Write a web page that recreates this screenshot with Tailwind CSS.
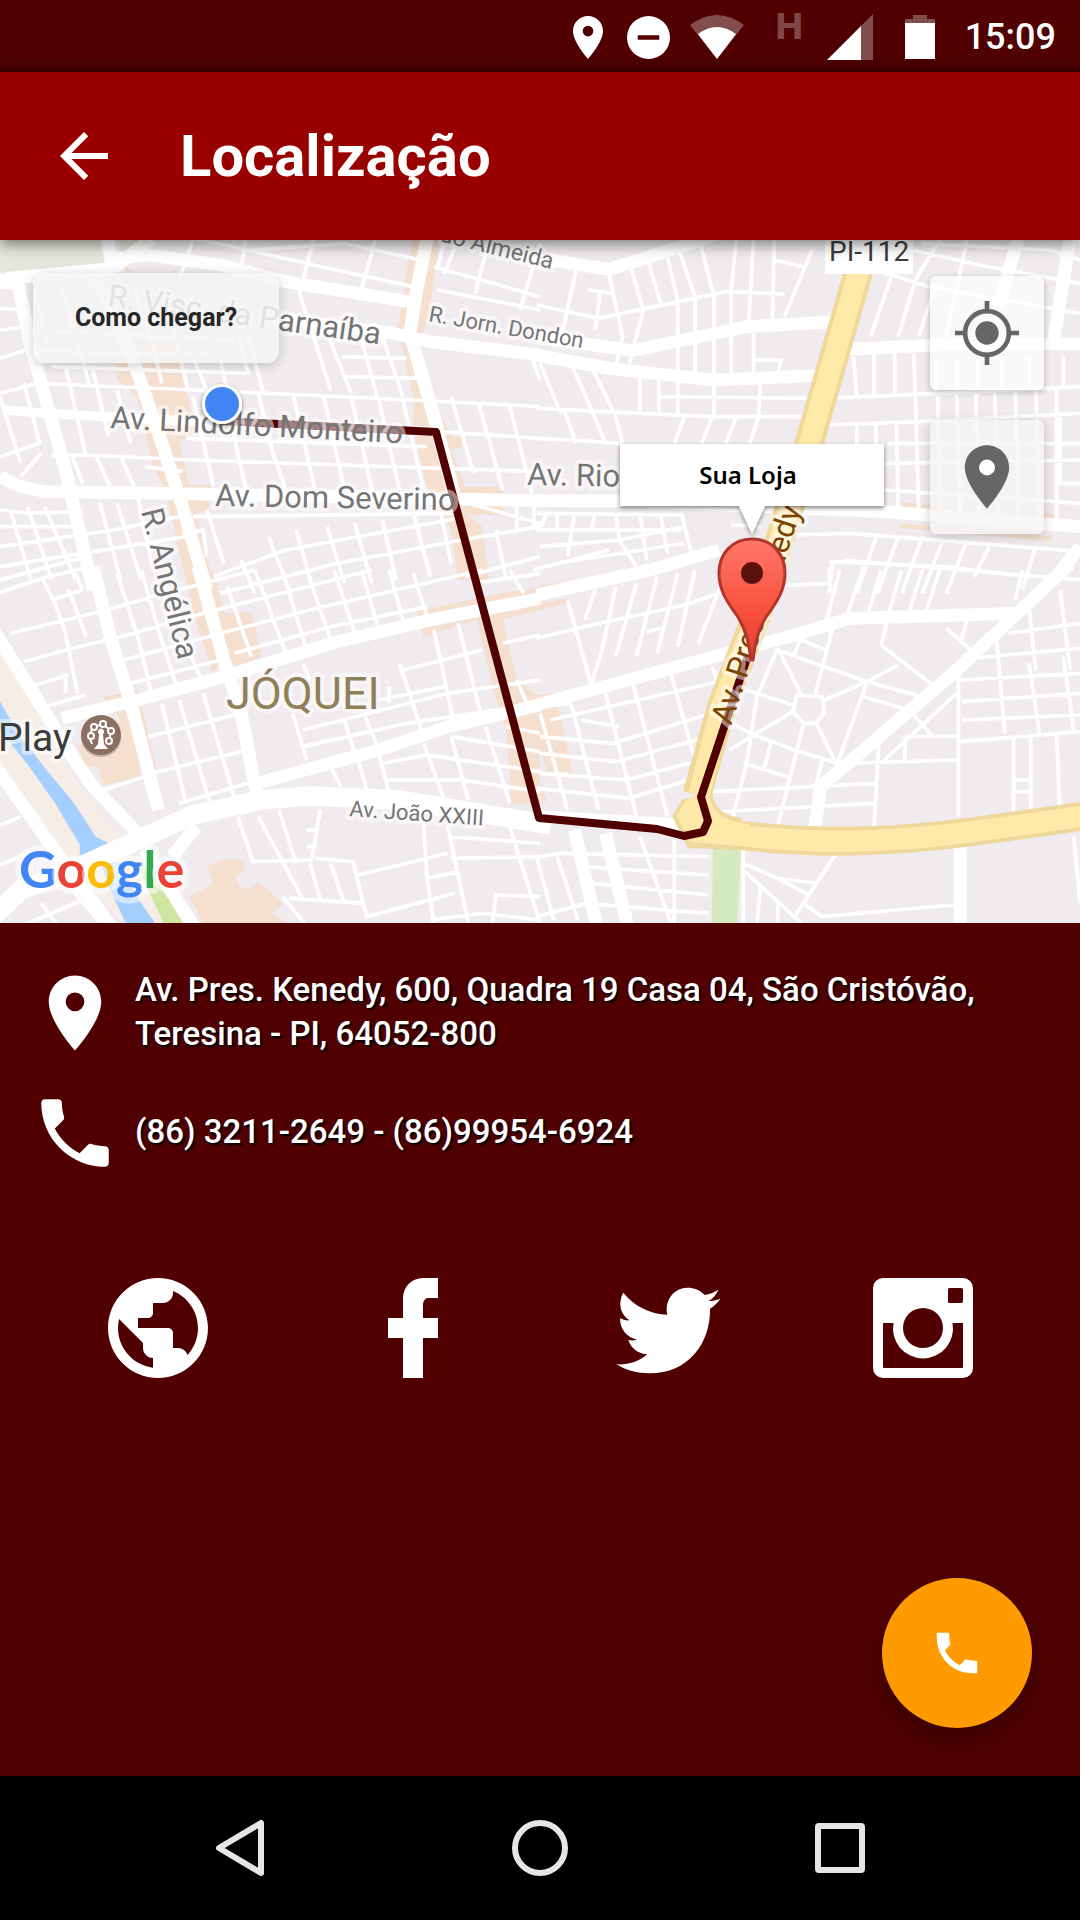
<!DOCTYPE html>
<html lang="pt-BR">

<head>
    <meta charset="UTF-8">
    <meta name="viewport" content="width=device-width, initial-scale=1.0">
    <title>Localização</title>
    <script src="https://cdn.jsdelivr.net/npm/@tailwindcss/browser@4"></script>
</head>

<body class="bg-[#500000] font-['Roboto',sans-serif] min-h-screen flex flex-col">

  <!-- Status bar -->
  <div class="h-[72px] bg-linear-to-b from-[#500000] from-80% to-[#400000] flex items-center justify-end pt-0.5 pr-6 text-white">
    <svg class="w-[30px] h-[43px]" viewBox="5 2 14 20" fill="currentColor"><path d="M12 2C8.13 2 5 5.13 5 9c0 5.25 7 13 7 13s7-7.75 7-13c0-3.87-3.13-7-7-7zm0 9.5a2.5 2.5 0 0 1 0-5 2.5 2.5 0 0 1 0 5z"/></svg>
    <svg class="ml-6 w-[43px] h-[43px]" viewBox="2 2 20 20" fill="currentColor"><path d="M12 2a10 10 0 1 0 0 20 10 10 0 0 0 0-20zm5 11H7v-2h10z"/></svg>
    <svg class="ml-5 w-[54px] h-[44px]" viewBox="0 0 54 44" fill="currentColor"><path class="opacity-30" d="M0 10Q27-10 54 10L27 44z"/><path d="M8 19Q27 5 46 19L27 44z"/></svg>
    <span class="ml-8 h-[58px] text-[36px] leading-9 font-extrabold font-['Inter',sans-serif] text-white/30">H</span>
    <svg class="ml-6 w-[46px] h-[46px]" viewBox="0 0 46 46" fill="currentColor"><path class="opacity-30" d="M34 12L46 0v46H34z"/><path d="M34 12v34H0z"/></svg>
    <svg class="ml-8 w-[30px] h-[44px]" viewBox="0 0 30 44" fill="currentColor"><path class="opacity-30" d="M8 0h14v4h8v4H0V4h8z"/><path d="M0 8h30v36H0z"/></svg>
    <time class="ml-[30px] text-[36px] leading-[68px] font-medium">15:09</time>
  </div>

  <!-- Header -->
  <header class="relative z-10 h-[168px] bg-[#990000] shadow-[0_4px_14px_rgba(0,0,0,.5)] flex items-center gap-[60px] px-12">
    <button type="button" aria-label="Voltar" class="text-white">
      <svg class="w-[72px] h-[72px]" viewBox="0 0 24 24" fill="currentColor"><path d="M20 11H7.83l5.59-5.59L12 4l-8 8 8 8 1.41-1.41L7.83 13H20v-2z"/></svg>
    </button>
    <h1 class="text-white text-[58px] leading-[72px] font-bold">Localização</h1>
  </header>

  <!-- Map -->
  <main class="grow flex flex-col">
    <section class="relative" aria-label="Mapa">
      <svg class="block w-full bg-[#efebee]" viewBox="0 240 1080 683" font-family="Roboto, sans-serif">
        <defs>
          <linearGradient id="marker" x1="0" y1="0" x2="0" y2="1">
            <stop offset="0" stop-color="#ff7868"/>
            <stop offset=".6" stop-color="#f8503c"/>
            <stop offset="1" stop-color="#e53d2e"/>
          </linearGradient>
          <filter id="soft" x="-20%" y="-20%" width="140%" height="160%">
            <feDropShadow dx="0" dy="2" stdDeviation="2" flood-opacity=".5"/>
          </filter>
        </defs>

        <!-- Areas -->
        <g transform="translate(0 230) scale(.3444 .3333)">
          <path fill="#e6e6dc" d="M0 30H290L302 95L250 130L0 125zM345 30H405L350 75z"/>
          <path fill="#f5dfcf" d="M1200 30H1275L1250 230L1220 340L1265 520L1310 620H1340V650L1310 660L1350 770H1460V855H1360L1400 890L1420 1050H1330L1310 900L1240 770L1200 600L1200 500L1155 300L1180 120zM360 100L385 130L370 150zM330 330L490 330L520 400L570 600L520 640L550 765H620L600 850L570 840L590 950L620 1050H540L480 780L440 700L400 500L340 450z"/>
        </g>
        <g transform="translate(540 230) scale(.3444 .3333)">
          <path fill="#f5dfcf" d="M1050 815L1495 852V864L1050 832zM1045 880L1485 918V934L1045 894z"/>
        </g>
        <g transform="translate(0 570) scale(.3444 .3333)">
          <path fill="#f5ede6" d="M0 235L230 650L375 820L530 1059H360L190 890L0 590z"/>
          <path fill="#a5cfff" d="M0 395L60 500L135 600L215 700L278 800L338 832L262 878L232 855V825L160 700L85 590L0 480zM290 870L345 880L410 1000L450 1059H365L320 960z"/>
          <path fill="#cde6a0" d="M390 870L440 900L530 1059H475z"/>
          <path fill="#f5dfcf" d="M535 0H620L650 130L730 125L760 260L690 290L650 260L620 310L560 130zM300 380L350 370L400 360L455 600H435L400 440L405 620L300 645L285 590H250L225 530L350 450zM1210 125L1400 80L1568 50V120L1460 150L1500 330L1568 380V700H1485L1470 480L1430 350L1385 150L1230 200zM600 890L650 868H705L710 895L680 925L700 950L720 960L750 935L820 1000L790 1030L830 1059H590L550 980L620 940z"/>
        </g>
        <g transform="translate(540 570) scale(.3444 .3333)">
          <path fill="#f5dfcf" d="M0 45L70 35V48L0 62zM0 100L80 85V102L0 120zM-10 375L35 368L55 420L95 605H20L-10 500zM-10 600L20 695H5z"/>
        </g>

        <!-- Side streets -->
        <g fill="none" stroke="#fff" stroke-width="11">
          <path transform="translate(0 230) scale(.3444 .3333)" d="M0 170L60 175M0 235L70 240M0 300L80 290M0 385L90 355M0 490L110 460L160 462L560 480L1200 510L1568 530M150 410L720 430L690 310M150 675L250 675L560 690L1568 725M540 625L1240 650M1270 605L1568 625M420 710L530 725M990 380L1180 385M1000 440L1230 445M80 360L320 370L700 375M100 300L680 330
            M560 30L520 150M715 20L700 110M910 30L870 190L960 480M1090 30L1040 210M540 20L720 60L910 105L1200 170M720 60L1000 40L1220 90M1260 110L1568 200M1290 30L1270 120M1330 30L1290 130M1420 30L1380 190M1568 40L1510 240M1270 180L1568 240
            M950 310L1020 490M1050 330L1095 500M1110 320L1170 500M720 320L765 490M560 380L600 480M640 390L660 480M100 180L140 350M180 180L230 350L260 470M390 180L440 330L470 460M480 190L545 480
            M190 410L250 680M270 420L315 620M340 480L380 640M1310 500L1375 730M1390 520L1460 780M1480 530L1545 790M1540 370L1568 450
            M560 500L620 770M650 490L715 780M750 490L800 700M770 600L830 780M850 490L915 780M940 500L1000 780M1020 500L1080 780M1100 510L1160 780M1170 510L1230 780
            M0 500L60 700M70 460L115 640L0 680M120 670L60 740M210 680L240 760M280 680L320 770M350 680L390 770M0 840L80 850L240 845M0 890L230 890M0 950L330 900L520 860M0 1010L540 920M0 1050L250 980M30 840L90 1050M80 830L150 1050M130 830L220 1050M290 820L350 1050M340 820L410 1050M400 800L440 1000
            M560 860L1320 850M620 1040L830 960L1330 865M640 1090L980 1000L1340 930L1568 890M600 840L650 1000M700 990L740 1090M780 920L840 1080M860 900L910 1080M950 890L1000 1060M1030 880L1080 1060M1110 870L1150 1050M1200 850L1250 1040M1280 850L1310 1000M1360 820L1568 880M1500 830V900M1550 830V890M1440 900L1470 1050M1350 1040L1568 980M530 910L590 900L600 980"/>
          <path transform="translate(540 230) scale(.3444 .3333)" d="M105 120L60 330M140 180L210 190M175 185L160 300M200 130L240 320L220 410M260 100L300 240L260 400M310 80L350 220M365 60L400 210V550M400 50L450 200V450M460 20L505 200V560M570 30L555 180V450M620 30L605 290M680 30L675 270M790 60L710 260M-10 225L170 265L540 185L710 192M680 90L770 112M620 390H700L690 435M620 310V440M290 430V545M345 440V545M345 500L800 505L950 500L1568 470M-10 535L500 560L830 560M70 540L105 640M-10 625L90 630L230 640M0 400L60 550M90 400L150 540L190 640M150 410L220 560L240 640M420 560L390 640M500 560L470 640M570 560L540 640M640 450L635 560L610 640
            M910 380L920 500M970 370V500M1030 370V500M1085 370L1090 500M830 585L1100 575L1568 550M920 585V690L930 820M975 585V830M1035 580L1040 840M1090 500L1100 850M1155 490L1160 850M1210 480L1220 850M1265 480L1275 860M1320 480L1330 860M1380 480L1390 860M1440 470L1450 870M1500 480V870M1010 640H1568M1000 700L1568 690M1000 780L1568 820M1020 140L960 320M1090 150L1040 320M1160 30L1090 150M1150 160L1100 320M970 120L1130 170L1568 250M1080 60L1300 110L1568 160M1240 30L1180 320M1110 40L1480 60L1568 90M1150 390V500M1210 390V500M1270 390V500M1340 380V480M1420 380V470M1520 380V470M1510 550V760H1568
            M-10 850L410 855M-10 900L410 900M0 950L230 930L420 890M50 1000L420 940M-20 1020L200 960M20 850L0 900M50 850V900M100 850L80 980M160 850L150 900M220 850L230 930L280 1010M290 850L310 990M350 850L370 970M410 850L440 970M555 885L640 890M740 915L900 910L1568 965M980 910L920 1090M1040 920L980 1090M1110 920L1050 1090M1170 930L1110 1090M1240 930L1180 1090M1310 940L1260 1040M1440 950L1400 1080M850 990L840 1090M840 995L1180 1010L1420 1040"/>
          <path transform="translate(0 570) scale(.3444 .3333)" d="M-10 70L140 20L260 -10M30 190L290 125L480 70L740 0M150 90L240 60M70 275L210 235L350 200L590 130L740 90L1080 0M100 345L200 315M130 410L250 375M360 270L640 190L900 120L1150 60L1400 0M380 340L640 270M680 250L960 170L1240 110
            M120 20L160 100L190 190L225 370M200 60L250 200M220 10L240 60M340 10L400 200L440 370M410 0L460 180L510 340M490 -10L530 180M550 250L590 340M660 50L730 260M740 0L830 250M820 0L890 240M890 0L960 210M970 0L1030 190M1050 0L1100 180M1130 0L1170 150M1200 10L1240 140M190 310V370
            M470 400L540 700M520 390L610 700M590 370L680 680M430 500L700 430M440 610L720 540M520 700L720 640M850 430L890 570M880 280L900 330M880 480L1300 370L1568 330M880 530L1180 460L1440 420M1000 450L1030 550M1060 440L1100 540M1160 280L1230 500M1260 180L1320 470M1330 160L1400 450M1170 300L1400 240M1130 350V400M1100 390L1290 350M1460 220L1568 195M1500 330L1530 400M1480 0L1520 70M1380 40L1568 10
            M960 590L990 650M1040 570L1065 660M1100 550L1130 670M1230 520L1290 690M1310 500L1360 690M1410 470L1480 700M1470 470L1568 490M1110 580L1240 555L1568 605M1120 630L1340 630L1568 665M1310 500L1568 545
            M690 740L735 875L905 870L930 720M750 740L880 990M810 720L860 880M890 780H925M890 830H920M915 865L1025 875L1065 1040L1320 970M840 985L1060 1000M900 880L930 990M960 880L1000 1000M820 980L900 1080M1040 915L1300 850M1230 760L1240 925L1260 1060M1300 770L1360 1060M1300 800L1568 820M1310 865L1568 860M1480 770L1568 1060M1240 925L1330 905M1430 1059L1440 975L1568 980M1250 1050L1400 1030L1568 1050M-10 770L60 740M-10 890L100 840M60 1070L240 990M120 1000L170 1070M210 960L300 1070M300 660L420 620"/>
          <path transform="translate(540 570) scale(.3444 .3333)" d="M-10 205L150 165L420 105L520 70M160 60L130 150M220 50L180 240L150 340M280 40L220 260M340 20L280 260M400 10L340 250M450 0L400 230M520 60L460 220M80 90L150 350M310 185L350 175M640 50L840 40M840 -10V40M870 0L830 160M940 -10L890 140M990 0L950 140M1050 0L1010 140M1110 0L1070 130M1160 0L1120 130M880 -30L1568 30M1400 0L1380 90M1360 190L1568 160M1420 110L1440 300M1510 60L1540 300M1250 265L1568 235M1220 330L1568 310M1225 395L1568 370M1225 450L1568 435M1220 515L1568 485M1325 200L1350 490M1420 280L1450 490M1520 260L1550 480M1215 310V740M1375 500V740M1425 490V740M1500 490L1510 740M1380 630H1425M1380 665H1425
            M690 235L630 380L600 580L560 740M690 235L760 375M690 240L950 335L1040 285M850 175L800 370M760 210L830 240M760 200L735 260M990 225L1140 345M990 225L1010 150M1180 175L1250 240M1240 150L1220 220M825 390L950 335M950 335L860 590M950 335L1110 380M940 380L1070 420M1080 430L1140 500M1000 570L1210 370M1060 500L1210 498M1060 500V570M880 580L1210 570M985 500L970 770M745 375L820 380L825 430L800 460H765L735 425zM735 405L600 360M735 425L620 495L740 540L880 585M765 460L690 770M800 455L860 580M550 540L620 495L540 450M670 520L650 600M590 580L720 620M820 570L800 650M500 665L975 640M520 725L970 700
            M30 450L540 330M0 410L90 400M0 500L210 520L500 430M0 550L220 575L490 500M0 610L250 630L450 575M-10 655L260 685L430 630M90 400L170 720M190 370L280 740M270 340L370 740M380 310L450 570M500 290L520 350M120 450L230 470M0 430L80 720
            M0 860L60 850L490 860M50 860L110 1050M-10 860L40 1050M120 890L490 915M150 940L490 975M130 1000L490 1030M-10 1040L140 1000M290 800L380 1059M390 810V1059M590 880L690 925L805 940M590 900L770 1070M690 925L780 975M860 850L740 1040M770 1005L820 1040L1200 1005M640 950L630 1059M690 1000V1059M590 840V1059M1550 800L1568 1000"/>
        </g>

        <!-- Avenues -->
        <g fill="none" stroke="#fff" stroke-linejoin="round" stroke-width="38">
          <path transform="translate(0 230) scale(.3444 .3333)" d="M310 0L325 110M20 145L330 115L440 25M330 85L430 75L640 105L830 155L1190 215M-10 150L50 150L90 350L190 720L270 1080M250 130L300 180L390 400L470 640L530 830L600 1080M760 260L1140 310L1250 335L1568 375M1245 0L1210 180L1190 310L1260 560L1320 800M0 740L60 770L130 785L480 790L1568 812"/>
          <path stroke-width="28" transform="translate(0 230) scale(.3444 .3333)" d="M10 540L140 550L400 565L1260 605"/>
          <path transform="translate(540 230) scale(.3444 .3333)" d="M30 90L200 118L440 40L560 -10M-10 320L270 362L600 290L860 275M-30 372L200 415L500 450L820 436M890 358L1200 342H1568M-10 812H240L640 830L1000 845L1568 890M1390 20L1330 230M1540 20L1490 340M1500 1040L1568 950"/>
          <path transform="translate(0 570) scale(.3444 .3333)" d="M-20 180L60 310L150 460L210 560L270 650L400 790M-20 580L110 770L200 900L330 1080M500 860L570 770M420 840L570 1080M270 -10L320 200L380 400L430 600L460 720M575 -10L650 270L700 430L745 670M180 445L400 390L650 320L980 215L1250 150L1568 85M745 640L1100 540L1300 470L1568 405"/>
          <path stroke-width="58" transform="translate(0 570) scale(.3444 .3333)" d="M-20 1040L60 960L200 905L400 810L560 735L760 690L900 678L1160 690L1600 765"/>
          <path transform="translate(540 570) scale(.3444 .3333)" d="M-10 405L540 250L740 195L900 145L1380 130M1540 -20L1200 310L815 650L797 780M-10 75L320 0L520 -60M-10 740L430 765M100 780L165 1070M190 790L255 1070M1220 830V1070"/>
        </g>

        <!-- Highway -->
        <path fill="#d5eabd" d="M713 848h28l-4 75h-25z"/>
        <g fill="none" stroke="#f0d89c" stroke-width="29">
          <path d="M872 225L809 444L755 620L722 705L697 795"/>
          <path d="M688 832L746 836Q850 848 970 832L1085 816"/>
        </g>
        <path fill="#f0d89c" d="M682 800L672 816L688 848L742 850L742 818Q713 815 712 790z"/>
        <g fill="none" stroke="#ffe9a9" stroke-width="21">
          <path d="M872 225L809 444L755 620L722 705L699 795"/>
          <path d="M700 832L746 836Q850 848 970 832L1085 816"/>
        </g>
        <path fill="#ffe9a9" d="M686 800L677 816L690 842L750 846V824Q711 822 708 790z"/>
        <path fill="#fff" d="M825 240h88v34h-88z"/>

        <!-- Route -->
        <path fill="none" stroke="#500000" stroke-width="8" stroke-linejoin="round" d="M222 421L436 432L539 818L657 829L684 836L703 832L708 821L701 797L748 655"/>

        <!-- Street names -->
        <g fill="#757575" stroke="#fff" stroke-opacity=".5" stroke-width="8" stroke-linejoin="round" paint-order="stroke" font-size="31">
          <text transform="translate(107 306) rotate(8)">R. Visc. da Parnaíba</text>
          <text transform="translate(110 428) rotate(3)">Av. Lindolfo Monteiro</text>
          <text transform="translate(215 506) rotate(1)">Av. Dom Severino</text>
          <text transform="translate(527 485) rotate(1)">Av. Rio</text>
          <text transform="translate(141 511) rotate(76)">R. Angélica</text>
          <text font-size="22" transform="translate(428 321) rotate(10)">R. Jorn. Dondon</text>
          <text font-size="23" transform="translate(439 241) rotate(14)">do Almeida</text>
          <text font-size="22" transform="translate(349 816) rotate(4)">Av. João XXIII</text>
          <text fill="#7a4400" transform="translate(731 726) rotate(-72)">Av. Pres. Kenedy</text>
          <text fill="#8f8058" font-size="45" x="226" y="709">JÓQUEI</text>
          <text fill="#3c3c3c" font-size="39" x="-2" y="751">Play</text>
          <text fill="#3c3c3c" font-size="28" x="829" y="261">PI-112</text>
        </g>

        <!-- Park -->
        <circle cx="101" cy="737" r="20" fill="#000" fill-opacity=".2"/>
        <circle cx="101" cy="735" r="20" fill="#8d6e63"/>
        <g fill="none" stroke="#fff" stroke-width="2">
          <path d="M92 744L89 736L93 727L103 724L111 731L109 741"/>
          <g fill="#8d6e63"><circle cx="91" cy="736" r="3"/><circle cx="94" cy="727" r="3"/><circle cx="103" cy="724" r="3"/><circle cx="111" cy="731" r="3"/><circle cx="109" cy="741" r="3"/></g>
        </g>
        <path fill="#fff" d="M99 734a3 3 0 1 1 4 0l1 10 4 5H94l4-5z"/>

        <!-- Google -->
        <text x="19" y="888" font-family="Lato, sans-serif" font-weight="700" font-size="52" stroke="#fff" stroke-opacity=".5" stroke-width="12" stroke-linejoin="round" paint-order="stroke"><tspan fill="#4285f4">G</tspan><tspan fill="#ea4335">o</tspan><tspan fill="#fbbc05">o</tspan><tspan fill="#4285f4">g</tspan><tspan fill="#34a853">l</tspan><tspan fill="#ea4335">e</tspan></text>

        <!-- My position -->
        <circle cx="222" cy="404" r="20" fill="#fff" filter="url(#soft)"/>
        <circle cx="222" cy="404" r="17" fill="#4285f4"/>

        <!-- Store marker -->
        <path fill="url(#marker)" stroke="#b0352a" stroke-width="3" d="M752 539C732 539 719 554 719 573C719 592 729 604 738 617C747 632 749 645 751 660H753C755 645 757 632 766 617C775 604 785 592 785 573C785 554 772 539 752 539z"/>
        <circle cx="752" cy="573" r="11" fill="#5a120e"/>
        <path fill="#fff" filter="url(#soft)" d="M620 444H884V506H765L752 534L739 506H620z"/>
        <text x="748" y="484" text-anchor="middle" font-family="Noto Sans, sans-serif" font-weight="600" font-size="24">Sua Loja</text>
      </svg>

      <button type="button" class="absolute left-[33px] top-[33px] w-[246px] h-[90px] rounded-xl bg-[#f5f5f5]/85 shadow-[0_2px_12px_rgba(0,0,0,.2)] text-[#262626] text-[25px] font-bold">Como chegar?</button>

      <div class="absolute right-9 top-9 flex flex-col gap-[30px] text-[#666666]">
        <button type="button" aria-label="Minha localização" class="w-[114px] h-[114px] rounded-md bg-white/70 shadow-[0_2px_6px_rgba(0,0,0,.25)] flex items-center justify-center">
          <svg class="w-[70px] h-[70px]" viewBox="0 0 24 24" fill="none" stroke="currentColor" stroke-width="1.6"><circle cx="12" cy="12" r="7.5"/><circle cx="12" cy="12" r="4" fill="currentColor" stroke="none"/><path d="M12 1v3.5M12 19.5V23M1 12h3.5M19.5 12H23"/></svg>
        </button>
        <button type="button" aria-label="Localização da loja" class="w-[114px] h-[114px] rounded-md bg-[#f5f5f5]/80 shadow-[0_2px_12px_rgba(0,0,0,.2)] flex items-center justify-center">
          <svg class="w-[76px] h-[76px]" viewBox="0 0 24 24"><circle cx="12" cy="9" r="3" fill="#fff"/><path fill="currentColor" d="M12 2C8.13 2 5 5.13 5 9c0 5.25 7 13 7 13s7-7.75 7-13c0-3.87-3.13-7-7-7zm0 9.5a2.5 2.5 0 0 1 0-5 2.5 2.5 0 0 1 0 5z"/></svg>
        </button>
      </div>
    </section>

    <!-- Contact -->
    <section class="relative grow px-[30px] pt-[45px] pb-[240px] text-white">
      <address class="not-italic flex flex-col gap-[30px] text-[33px] leading-[44px] font-medium text-shadow-[2px_2px_2px_#000]">
        <div class="flex items-center gap-[15px]">
          <svg class="w-[90px] h-[90px] shrink-0" viewBox="0 0 24 24" fill="currentColor"><path d="M12 2C8.13 2 5 5.13 5 9c0 5.25 7 13 7 13s7-7.75 7-13c0-3.87-3.13-7-7-7zm0 9.5a2.5 2.5 0 0 1 0-5 2.5 2.5 0 0 1 0 5z"/></svg>
          <p class="pb-0.5">Av. Pres. Kenedy, 600, Quadra 19 Casa 04, São Cristóvão,<br>Teresina - PI, 64052-800</p>
        </div>
        <div class="flex items-center gap-[15px]">
          <svg class="w-[90px] h-[90px] shrink-0" viewBox="0 0 24 24" fill="currentColor"><path d="M6.62 10.79c1.44 2.83 3.76 5.14 6.59 6.59l2.2-2.2c.27-.27.67-.36 1.02-.24 1.12.37 2.33.57 3.57.57.55 0 1 .45 1 1V20c0 .55-.45 1-1 1-9.39 0-17-7.61-17-17 0-.55.45-1 1-1h3.5c.55 0 1 .45 1 1 0 1.25.2 2.45.57 3.57.11.35.03.74-.25 1.02l-2.2 2.2z"/></svg>
          <p class="pb-0.5">(86) 3211-2649 - (86)99954-6924</p>
        </div>
      </address>

      <nav class="mt-[90px] grid grid-cols-4 justify-items-center">
        <a href="#" aria-label="Site"><svg class="w-[120px] h-[120px]" viewBox="0 0 24 24" fill="currentColor"><path d="M12 2C6.48 2 2 6.48 2 12s4.48 10 10 10 10-4.48 10-10S17.52 2 12 2zm-1 17.93c-3.95-.49-7-3.85-7-7.93 0-.62.08-1.21.21-1.79L9 15v1c0 1.1.9 2 2 2v1.93zm6.9-2.54c-.26-.81-1-1.39-1.9-1.39h-1v-3c0-.55-.45-1-1-1H8v-2h2c.55 0 1-.45 1-1V7h2c1.1 0 2-.9 2-2v-.41c2.93 1.19 5 4.06 5 7.41 0 2.08-.8 3.97-2.1 5.39z"/></svg></a>
        <a href="#" aria-label="Facebook"><svg class="w-[120px] h-[120px]" viewBox="0 0 24 24" fill="currentColor"><path d="M17 2v4h-2c-.69 0-1 .81-1 1.5V10h3v4h-3v8h-4v-8H7v-4h3V6a4 4 0 0 1 4-4h3z"/></svg></a>
        <a href="#" aria-label="Twitter"><svg class="w-[120px] h-[120px]" viewBox="144 84 360 360" fill="currentColor"><path d="M190 158C222 198 270 222 322 224C312 178 345 143 382 143C402 143 420 150 434 165C448 163 462 157 475 149C470 163 460 174 446 183C458 183 469 181 481 176C473 188 462 198 450 206C452 310 385 400 268 400C232 400 198 391 169 373C204 375 235 366 262 343C235 342 213 325 205 300C213 302 222 302 231 299C202 293 180 270 180 235C189 239 198 242 208 241C180 222 173 188 190 158z"/></svg></a>
        <a href="#" aria-label="Instagram"><svg class="w-[120px] h-[120px]" viewBox="0 0 24 24" fill="currentColor" fill-rule="evenodd"><path d="M4 2h16a2 2 0 0 1 2 2v16a2 2 0 0 1-2 2H4a2 2 0 0 1-2-2V4a2 2 0 0 1 2-2zM17.3 4a.3.3 0 0 0-.3.3v2.4a.3.3 0 0 0 .3.3h2.4a.3.3 0 0 0 .3-.3V4.3a.3.3 0 0 0-.3-.3zM12 8a4 4 0 1 0 0 8 4 4 0 0 0 0-8zM4 11v8.8a.2.2 0 0 0 .2.2h15.6a.2.2 0 0 0 .2-.2V11h-2.1A6 6 0 1 1 6.1 11z"/></svg></a>
      </nav>

      <button type="button" aria-label="Ligar" class="absolute right-12 bottom-12 w-[150px] h-[150px] rounded-full bg-[#ff9b00] shadow-[0_12px_24px_rgba(0,0,0,.3)] flex items-center justify-center">
        <svg class="w-[54px] h-[54px]" viewBox="0 0 24 24" fill="currentColor"><path d="M6.6 10.8c1.44 2.83 3.76 5.15 6.6 6.6l2.6-2.6c1.6.5 3.4.7 5.2.7V21h-2C10 21 3 14 3 5V3h5.5c0 1.8.1 3.6.6 5.2z"/></svg>
      </button>
    </section>
  </main>

  <!-- Navigation bar -->
  <div class="h-[144px] bg-black px-[90px] grid grid-cols-3 items-center text-[#e6e6e6]">
    <button type="button" aria-label="Voltar" class="justify-self-center"><svg class="w-[60px] h-[60px]" viewBox="0 0 60 60" fill="none" stroke="currentColor" stroke-width="6" stroke-linejoin="round"><path d="M51 5V55L9 30z"/></svg></button>
    <button type="button" aria-label="Início" class="justify-self-center"><svg class="w-[60px] h-[60px]" viewBox="0 0 60 60" fill="none" stroke="currentColor" stroke-width="6"><circle cx="30" cy="30" r="25"/></svg></button>
    <button type="button" aria-label="Recentes" class="justify-self-center"><svg class="w-[60px] h-[60px]" viewBox="0 0 60 60" fill="none" stroke="currentColor" stroke-width="6"><rect x="8" y="8" width="44" height="44" rx="1"/></svg></button>
  </div>
</body>
</html>
